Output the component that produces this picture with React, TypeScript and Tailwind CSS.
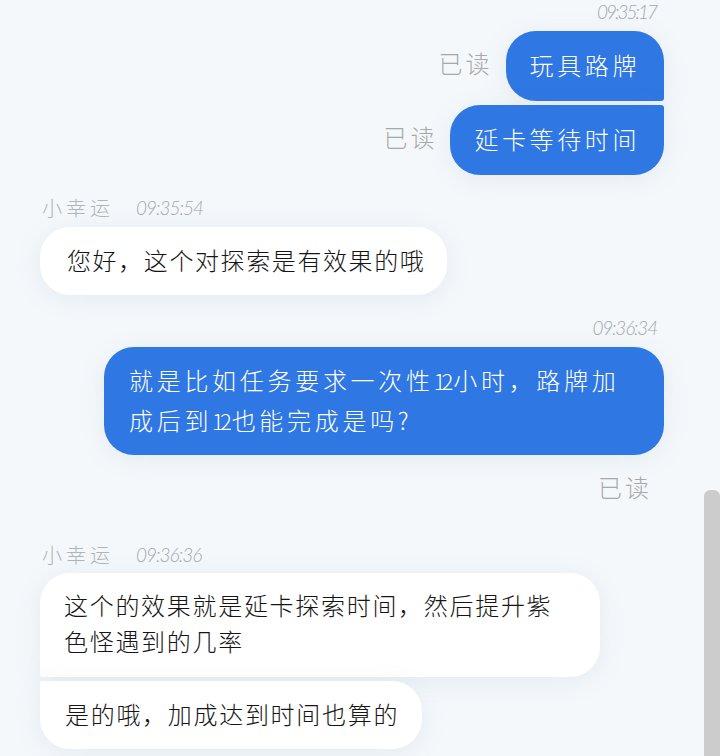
const cjk = "font-['Noto_Sans_CJK_SC',sans-serif] font-light";
const time = "font-['Lato',sans-serif] font-light italic text-[19px] leading-[22px] text-[#a4a8ab]";
const shadow = "shadow-[0_4px_24px_rgba(120,140,160,0.12)]";
const digits = "text-[22px] tracking-[-4px] pr-[4px]";

function ReadMark() {
  return <span className={`${cjk} pb-[6px] text-[24px] leading-[32px] tracking-[3px] text-[#a8a8a8]`}>已读</span>;
}

function Sender({ at }: { at: string }) {
  return (
    <div className="flex items-center gap-[22px] pl-[42px]">
      <span className={`${cjk} text-[20px] leading-[24px] tracking-[4px] text-[#b0b4b7]`}>小幸运</span>
      <span className={`${time} tracking-[-1px]`}>{at}</span>
    </div>
  );
}

export default function App() {
  return (
    <div className="relative h-[756px] w-[720px] overflow-hidden bg-[#f4f8fb]">
      {/* Scrollbar */}
      <div className="absolute bottom-0 right-0 h-[266px] w-[16px] rounded-t-[6px] bg-[#cccccc]" />

      <div className="flex flex-col">
        {/* First sent group */}
        <div className={`${time} mt-[1px] pr-[64px] text-right tracking-[-2px]`}>09:35:17</div>
        <div className="mt-[8px] flex items-center justify-end gap-[13px] pr-[56px]">
          <ReadMark />
          <div className={`${cjk} ${shadow} flex h-[70px] items-center rounded-[30px] rounded-br-[3px] bg-[#2f77e3] px-[24px] pb-[3px] text-[24px] tracking-[3.6px] text-white`}>
            玩具路牌
          </div>
        </div>
        <div className="mt-[4px] flex items-center justify-end gap-[13px] pr-[56px]">
          <ReadMark />
          <div className={`${cjk} ${shadow} flex h-[70px] items-center rounded-[30px] rounded-tr-[3px] bg-[#2f77e3] px-[24px] pb-[3px] text-[24px] tracking-[3.6px] text-white`}>
            延卡等待时间
          </div>
        </div>

        {/* First reply */}
        <div className="mt-[21px]">
          <Sender at="09:35:54" />
        </div>
        <div className="mt-[7px] flex pl-[40px]">
          <div className={`${cjk} ${shadow} flex h-[68px] items-center rounded-[30px] bg-white pb-[3px] pl-[27px] pr-[22px] text-[24px] tracking-[1.6px] text-[#151515]`}>
            您好，这个对探索是有效果的哦
          </div>
        </div>

        {/* Second sent group */}
        <div className={`${time} mt-[22px] pr-[63px] text-right tracking-[-1.2px]`}>09:36:34</div>
        <div className="mt-[8px] flex justify-end pr-[56px]">
          <div className={`${cjk} ${shadow} flex h-[108px] w-[560px] flex-col justify-center rounded-[30px] bg-[#2f77e3] pb-[2px] pl-[25px] text-[24px] leading-[40px] tracking-[3.7px] text-white`}>
            <span>就是比如任务要求一次性<span className={digits}>12</span>小时，路牌加</span>
            <span>成后到<span className={digits}>12</span>也能完成是吗?</span>
          </div>
        </div>
        <div className="mt-[16px] flex justify-end pr-[68px]">
          <ReadMark />
        </div>

        {/* Second reply */}
        <div className="mt-[34px]">
          <Sender at="09:36:36" />
        </div>
        <div className="mt-[6px] flex pl-[40px]">
          <div className={`${cjk} ${shadow} flex h-[104px] w-[560px] flex-col justify-center rounded-[30px] rounded-bl-[3px] bg-white pb-[4px] pl-[24px] text-[24px] leading-[36px] tracking-[1.7px] text-[#151515]`}>
            <span>这个的效果就是延卡探索时间，然后提升紫</span>
            <span>色怪遇到的几率</span>
          </div>
        </div>
        <div className="mt-[4px] flex pl-[40px]">
          <div className={`${cjk} ${shadow} flex h-[68px] items-center rounded-[30px] rounded-tl-[3px] bg-white pb-[3px] pl-[25px] pr-[23px] text-[24px] tracking-[1.7px] text-[#151515]`}>
            是的哦，加成达到时间也算的
          </div>
        </div>
      </div>
    </div>
  );
}
